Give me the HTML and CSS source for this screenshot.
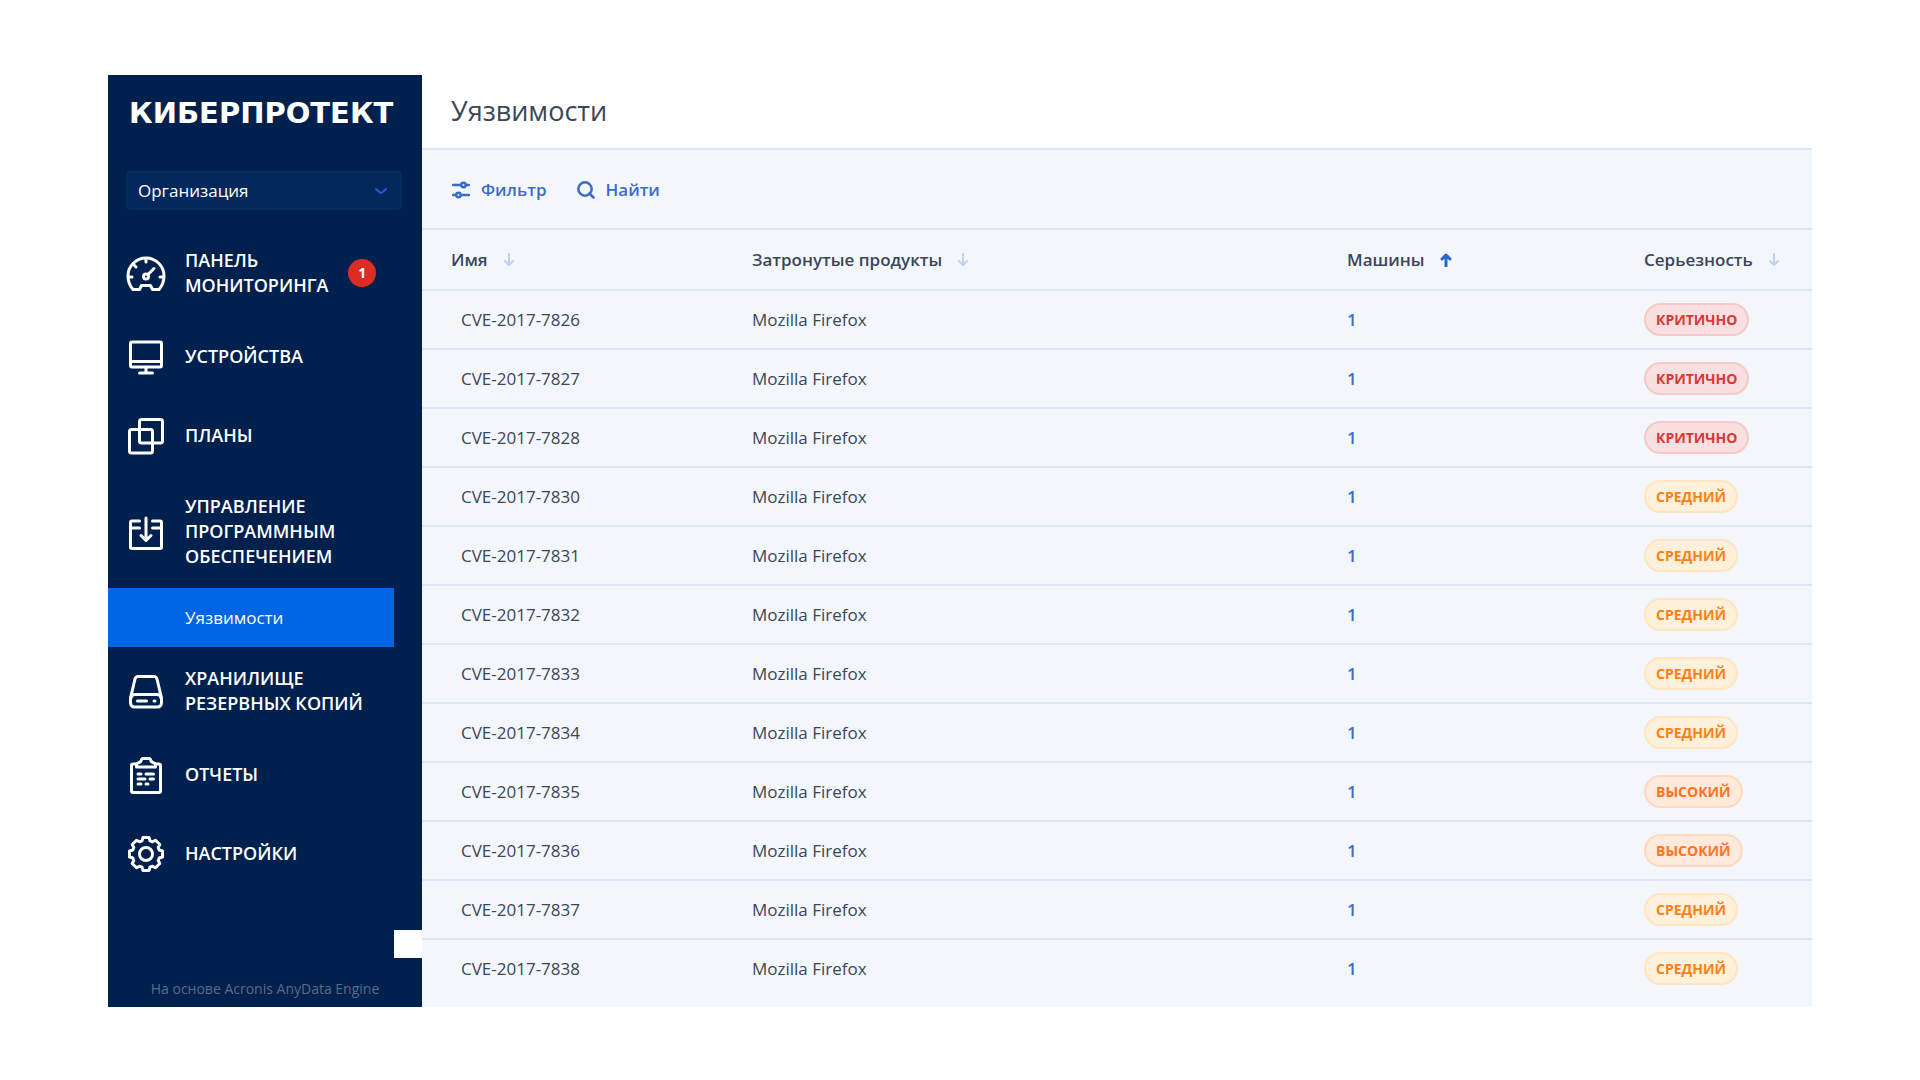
FILE: index.html
```html
<!DOCTYPE html>
<html lang="ru">
<head>
<meta charset="utf-8">
<meta name="viewport" content="width=device-width, initial-scale=1">
<title>Уязвимости</title>
<link rel="stylesheet" href="styles.css">
</head>
<body>
<svg class="sprite" aria-hidden="true">
  <symbol id="down" viewBox="0 0 12 14"><path d="M6 1v11M2 8l4 4 4-4"/></symbol>
  <symbol id="up" viewBox="0 0 12 14"><path d="M6 13V2M2 6l4-4 4 4"/></symbol>
</svg>
<div class="app">
  <aside class="sidebar">
    <a class="logo" href="#">КИБЕРПРОТЕКТ</a>
    <div class="unit">
      <select class="unit-select" aria-label="Организация"><option>Организация</option></select>
      <svg class="unit-arrow" viewBox="0 0 14 8"><path d="M2 2l4 3.500q1 .7 2 0l4-3.500"/></svg>
    </div>
    <nav class="nav">
      <a class="nav-item" href="#">
        <svg class="nav-icon" viewBox="0 0 40 40"><path d="M7 36.500C4 33 2 28.500 2 23a18 18 0 0 1 36 0c0 5.500-2 10-5 13.500h-6.500l-2-4h-9l-2 4z"/><path d="M20 6v3M3 24h3M34 24h3M8 12l2 2M22 21.500l6-6"/><circle cx="20" cy="23.500" r="2.500"/></svg>
        <span class="nav-label">ПАНЕЛЬ МОНИТОРИНГА</span>
        <span class="counter">1</span>
      </a>
      <a class="nav-item" href="#">
        <svg class="nav-icon" viewBox="0 0 40 40"><rect x="4.500" y="5" width="31" height="25" rx="1.500"/><path d="M5 24.500h30M20 30v6M13.500 36h13"/></svg>
        <span class="nav-label">УСТРОЙСТВА</span>
      </a>
      <a class="nav-item" href="#">
        <svg class="nav-icon" viewBox="0 0 40 40"><rect x="13.500" y="3.500" width="23" height="23.500" rx="2"/><rect x="3.500" y="13.500" width="23" height="23.500" rx="2"/></svg>
        <span class="nav-label">ПЛАНЫ</span>
      </a>
      <a class="nav-item" href="#">
        <svg class="nav-icon" viewBox="0 0 40 40"><path d="M13.500 9H6a1.500 1.500 0 0 0-1.500 1.500V35a1.500 1.500 0 0 0 1.500 1.500h28a1.500 1.500 0 0 0 1.500-1.500V10.500A1.500 1.500 0 0 0 34 9h-7.500M5 16h8.500M35 16h-8.500M20 6v22M15 23.500l5 5 5-5"/></svg>
        <span class="nav-label">УПРАВЛЕНИЕ ПРОГРАММНЫМ ОБЕСПЕЧЕНИЕМ</span>
      </a>
      <a class="nav-sub" href="#" aria-current="page">Уязвимости</a>
      <a class="nav-item" href="#">
        <svg class="nav-icon" viewBox="0 0 40 40"><path d="M12 5.500h16c1.500 0 2.500 1 3 2.500l4.500 19v4.500c0 2.500-1.500 4.500-4 4.500h-23c-2.500 0-4-2-4-4.500V27L9 8c.5-1.500 1.500-2.500 3-2.500z"/><path d="M5 27c.5-2.500 2-3.500 4-3.500h22c2 0 3.500 1 4 3.500M11.500 30h9M28 30h1"/></svg>
        <span class="nav-label">ХРАНИЛИЩЕ РЕЗЕРВНЫХ КОПИЙ</span>
      </a>
      <a class="nav-item" href="#">
        <svg class="nav-icon" viewBox="0 0 40 40"><path d="M10.500 9H7a1.500 1.500 0 0 0-1.500 1.500v25.500a1.500 1.500 0 0 0 1.500 1.500h26a1.500 1.500 0 0 0 1.500-1.500V10.500A1.500 1.500 0 0 0 33 9h-3.500"/><path d="M10.500 12V9.500c0-1.500 3.500-1.500 4.500-3.500.5-2 1-2.500 2-2.500h6c1 0 1.500.5 2 2.500 1 2 4.500 2 4.500 3.500V12z"/><path d="M12 19h3M20 19h7.500M12 24h7M24 24h3.500M12 29h3M20 29h2"/></svg>
        <span class="nav-label">ОТЧЕТЫ</span>
      </a>
      <a class="nav-item" href="#">
        <svg class="nav-icon" viewBox="-20 -20 40 40"><path d="M13.200-4 16.500-3V3L13.200 4 12.200 6.500 13.800 9.500 9.500 13.800 6.500 12.200 4 13.200 3 16.500H-3L-4 13.200-6.500 12.200-9.500 13.800-13.800 9.500-12.200 6.500-13.200 4-16.500 3V-3L-13.200-4-12.200-6.500-13.800-9.500-9.500-13.800-6.500-12.200-4-13.200-3-16.500H3L4-13.200 6.500-12.200 9.500-13.800 13.800-9.500 12.200-6.500z"/><circle r="6.500"/></svg>
        <span class="nav-label">НАСТРОЙКИ</span>
      </a>
    </nav>
    <button class="collapse" type="button" aria-label="Свернуть меню"></button>
    <p class="powered">На основе Acronis AnyData Engine</p>
  </aside>
  <main class="content">
    <header class="header"><h1 class="title">Уязвимости</h1></header>
    <div class="toolbar">
      <button class="tool" type="button"><svg class="tool-icon" viewBox="0 0 18 18"><path d="M1 4h7.500M14.500 4h2.500M1 14h2.500M9.500 14h7.500"/><circle cx="11.500" cy="4" r="2.200"/><circle cx="6.500" cy="14" r="2.200"/></svg>Фильтр</button>
      <button class="tool" type="button"><svg class="tool-icon" viewBox="0 0 18 18"><circle cx="8" cy="8" r="6.700"/><path d="M12.500 12.500l4 4"/></svg>Найти</button>
    </div>
    <table class="table">
      <colgroup><col class="col-name"><col><col class="col-machines"><col class="col-severity"></colgroup>
      <thead>
        <tr>
          <th><button class="sort" type="button">Имя<svg class="sort-icon"><use href="#down"/></svg></button></th>
          <th><button class="sort" type="button">Затронутые продукты<svg class="sort-icon"><use href="#down"/></svg></button></th>
          <th aria-sort="ascending"><button class="sort" type="button">Машины<svg class="sort-icon active"><use href="#up"/></svg></button></th>
          <th><button class="sort" type="button">Серьезность<svg class="sort-icon"><use href="#down"/></svg></button></th>
        </tr>
      </thead>
      <tbody>
        <tr><td>CVE-2017-7826</td><td>Mozilla Firefox</td><td><a href="#">1</a></td><td><span class="badge critical">КРИТИЧНО</span></td></tr>
        <tr><td>CVE-2017-7827</td><td>Mozilla Firefox</td><td><a href="#">1</a></td><td><span class="badge critical">КРИТИЧНО</span></td></tr>
        <tr><td>CVE-2017-7828</td><td>Mozilla Firefox</td><td><a href="#">1</a></td><td><span class="badge critical">КРИТИЧНО</span></td></tr>
        <tr><td>CVE-2017-7830</td><td>Mozilla Firefox</td><td><a href="#">1</a></td><td><span class="badge medium">СРЕДНИЙ</span></td></tr>
        <tr><td>CVE-2017-7831</td><td>Mozilla Firefox</td><td><a href="#">1</a></td><td><span class="badge medium">СРЕДНИЙ</span></td></tr>
        <tr><td>CVE-2017-7832</td><td>Mozilla Firefox</td><td><a href="#">1</a></td><td><span class="badge medium">СРЕДНИЙ</span></td></tr>
        <tr><td>CVE-2017-7833</td><td>Mozilla Firefox</td><td><a href="#">1</a></td><td><span class="badge medium">СРЕДНИЙ</span></td></tr>
        <tr><td>CVE-2017-7834</td><td>Mozilla Firefox</td><td><a href="#">1</a></td><td><span class="badge medium">СРЕДНИЙ</span></td></tr>
        <tr><td>CVE-2017-7835</td><td>Mozilla Firefox</td><td><a href="#">1</a></td><td><span class="badge high">ВЫСОКИЙ</span></td></tr>
        <tr><td>CVE-2017-7836</td><td>Mozilla Firefox</td><td><a href="#">1</a></td><td><span class="badge high">ВЫСОКИЙ</span></td></tr>
        <tr><td>CVE-2017-7837</td><td>Mozilla Firefox</td><td><a href="#">1</a></td><td><span class="badge medium">СРЕДНИЙ</span></td></tr>
        <tr><td>CVE-2017-7838</td><td>Mozilla Firefox</td><td><a href="#">1</a></td><td><span class="badge medium">СРЕДНИЙ</span></td></tr>
      </tbody>
    </table>
  </main>
</div>
</body>
</html>
```
FILE: styles.css
```css
* { box-sizing: border-box; }

body {
  margin: 0;
  padding: 75px 108px 72px;
  background: #fff;
  color: #3b4657;
  font: 17px/24px "Open Sans", "Noto Sans", sans-serif;
}

a { color: inherit; text-decoration: none; }
button { padding: 0; border: 0; background: none; color: inherit; font: inherit; cursor: pointer; }
svg { fill: none; stroke: currentColor; stroke-linecap: round; stroke-linejoin: round; }
.sprite { display: none; }

.app { display: flex; }

/* Sidebar */
.sidebar {
  position: relative;
  display: flex;
  flex: none;
  flex-direction: column;
  width: 314px;
  background: #00204d;
  color: #fff;
}
.logo {
  margin: 22px 0 0 21px;
  font: bold 29px/32px "DejaVu Sans", sans-serif;
}
.unit { position: relative; margin: 42px 20px 19px 18px; }
.unit-select {
  display: block;
  width: 100%;
  height: 39px;
  padding: 0 10px;
  border: 2px solid #062c62;
  border-radius: 4px;
  background: #04285b;
  color: #fff;
  font: inherit;
  appearance: none;
}
.unit-arrow {
  position: absolute;
  top: 16px;
  right: 14px;
  width: 14px;
  height: 8px;
  color: #1c5fd0;
  stroke-width: 2;
  pointer-events: none;
}
.nav-item {
  display: flex;
  align-items: center;
  min-height: 79px;
  padding: 19px 18px;
  font-size: 18px;
  font-weight: 600;
  line-height: 25px;
}
.nav-icon { flex: none; width: 40px; height: 40px; margin-right: 19px; stroke-width: 3; }
.nav-label { max-width: 190px; }
.nav-label:has(+ .counter) { width: min-content; }
.counter {
  flex: none;
  width: 28px;
  height: 28px;
  margin-left: 20px;
  border-radius: 50%;
  background: #dc2d24;
  font-size: 14px;
  font-weight: 700;
  line-height: 28px;
  text-align: center;
}
.nav-sub {
  display: block;
  margin-right: 28px;
  padding: 17px 0 17px 77px;
  background: #0065e3;
  line-height: 25px;
}
.collapse {
  position: absolute;
  right: 0;
  bottom: 49px;
  width: 28px;
  height: 28px;
  background: #fff;
}
.powered {
  margin: auto 0 6px;
  color: #5b6c88;
  font-size: 14px;
  text-align: center;
}

/* Content */
.content { flex: 1; min-width: 0; padding-bottom: 8px; background: #f3f7fc; }
.header {
  padding: 20px 29px 21px;
  border-bottom: 2px solid #dce6f6;
  background: #fff;
}
.title { margin: 0; font-size: 27px; font-weight: 400; line-height: 32px; }
.toolbar {
  display: flex;
  gap: 30px;
  padding: 28px 30px 26px;
  border-bottom: 2px solid #dce6f6;
  color: #3b6bc9;
  font-weight: 600;
}
.tool { display: flex; align-items: center; gap: 11px; }
.tool-icon { width: 18px; height: 18px; stroke-width: 2.5; }

.table { width: 100%; border-collapse: separate; border-spacing: 0; table-layout: fixed; }
.col-name { width: 301px; }
.col-machines { width: 297px; }
.col-severity { width: 197px; }
.table th, .table td {
  height: 59px;
  padding: 0 0 0 29px;
  border-bottom: 2px solid #dce6f6;
  text-align: left;
  white-space: nowrap;
}
.table th { height: 61px; font-weight: 600; }
.table td:first-child { padding-left: 39px; }
.table tbody tr:last-child td { border-bottom-color: transparent; }
.table a { color: #3b6bc9; font-weight: 600; }
.sort { display: flex; align-items: center; gap: 15px; }
.sort-icon { width: 12px; height: 14px; color: #bfd1f2; stroke-width: 2; }
.sort-icon.active { color: #2668c9; stroke-width: 3; }

.badge {
  display: block;
  width: fit-content;
  padding: 0 10px;
  border: 2px solid;
  border-radius: 17px;
  font-size: 14px;
  font-weight: 700;
  line-height: 29px;
}
.critical { border-color: #f6c8c8; background: #f9dfdf; color: #d93636; }
.medium { border-color: #ffe5c0; background: #fff0dc; color: #ff8012; }
.high { border-color: #ffd9bf; background: #ffe9da; color: #ff7321; }
```
